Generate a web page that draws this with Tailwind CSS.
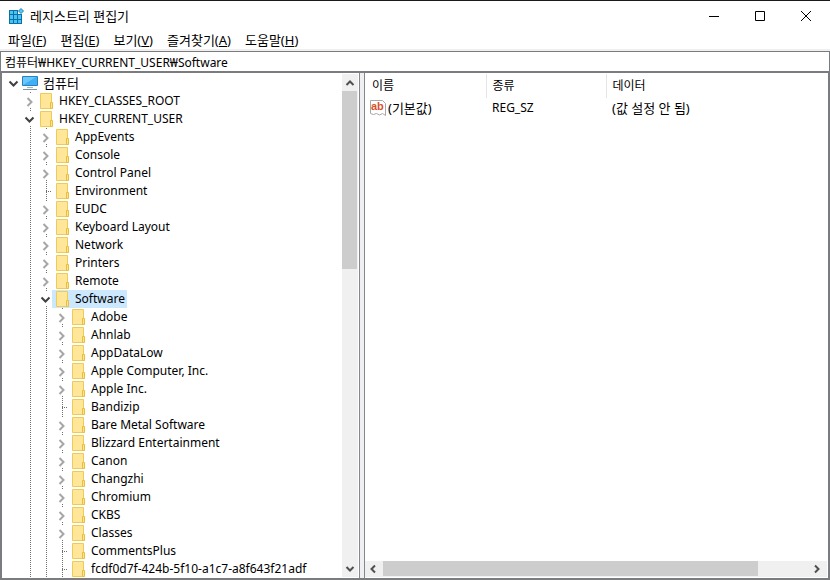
<!DOCTYPE html>
<html lang="ko">
<head>
  <meta charset="UTF-8" />
  <meta name="viewport" content="width=device-width, initial-scale=1" />
  <title>레지스트리 편집기</title>
  <script src="https://cdn.jsdelivr.net/npm/@tailwindcss/browser@4"></script>
</head>
<body class="h-screen overflow-hidden bg-white text-black text-[12px] leading-[18px] font-['Noto_Sans','Noto_Sans_CJK_KR',sans-serif]">
  <svg class="hidden">
    <symbol id="folder" viewBox="0 0 16 16">
      <path d="M2.500.5h11v15h-11z" fill="#ffe699" stroke="#eecb55" />
      <path d="M12.500 15.500v-6h2v6z" fill="#ffe48f" stroke="#e8bf3c" />
    </symbol>
    <symbol id="computer" viewBox="0 0 16 16">
      <path d="M.5 1.500h15v9H.5z" fill="#3fb0f5" stroke="#2a82bd" />
      <path d="M1 10V2h13z" fill="#6cc8fb" />
      <path d="M5 12h6v1H5z" fill="#9fb4c4" />
      <path d="M1 14.500h14" stroke="#7f95a6" />
    </symbol>
    <symbol id="closed" viewBox="0 0 14 14">
      <path d="M5.500 4l4 4-4 4" fill="none" stroke="#a6a6a6" stroke-width="2" />
    </symbol>
    <symbol id="open" viewBox="0 0 14 14">
      <path d="M3.500 5.500l4 4 4-4" fill="none" stroke="#404040" stroke-width="2" />
    </symbol>
    <symbol id="arrow" viewBox="0 0 16 16">
      <path d="M4.500 10l3.500-3.500 3.500 3.500" fill="none" stroke="#505050" stroke-width="2" />
    </symbol>
  </svg>

  <div class="flex h-full flex-col border-t border-[#1a1a1a]">
    <header class="flex h-[29px] shrink-0 items-center pl-2 pr-px">
      <svg class="h-4 w-4" viewBox="0 0 16 16">
        <path d="M1 2h9v4h4v10H1z" fill="#0b6fa8" />
        <path d="M2 3h3v3H2zM6 3h3v3H6zM2 7h3v4H2zM6 7h3v4H6zM10 7h3v4h-3zM2 12h3v3H2zM6 12h3v3H6zM10 12h3v3h-3z" fill="#4cc2f1" />
        <path d="M13 .5L15.500 3 13 5.500 10.500 3z" fill="#5cc4ee" stroke="#1d83b8" />
      </svg>
      <h1 class="ml-[6px] flex-1 text-[13px]">레지스트리 편집기</h1>
      <button class="flex h-full w-[46px] items-center justify-center" aria-label="최소화">
        <svg class="h-[10px] w-[10px]" viewBox="0 0 10 10"><path d="M0 5.500h10" stroke="#000" /></svg>
      </button>
      <button class="flex h-full w-[46px] items-center justify-center" aria-label="최대화">
        <svg class="h-[10px] w-[10px]" viewBox="0 0 10 10"><path d="M.5.5h9v9h-9z" fill="none" stroke="#000" /></svg>
      </button>
      <button class="flex h-full w-[46px] items-center justify-center" aria-label="닫기">
        <svg class="h-[10px] w-[10px]" viewBox="0 0 10 10"><path d="M0 0l10 10M10 0L0 10" stroke="#000" /></svg>
      </button>
    </header>

    <nav class="flex h-[21px] shrink-0 items-end gap-[14px] border-b-2 border-[#f0f0f0] pl-2 text-[13px]">
      <button>파일(<u>F</u>)</button>
      <button>편집(<u>E</u>)</button>
      <button>보기(<u>V</u>)</button>
      <button>즐겨찾기(<u>A</u>)</button>
      <button>도움말(<u>H</u>)</button>
    </nav>

    <input type="text" aria-label="주소" value="컴퓨터₩HKEY_CURRENT_USER₩Software"
      class="h-[21px] shrink-0 border border-[#7a7c80] pl-1 outline-none" />

    <main class="flex min-h-0 flex-1 border-x-2 border-b-2 border-t border-[#7a7c80] bg-[#f0f0f0]">
      <section class="flex w-[358px] shrink-0 border-r border-[#828790] bg-white pt-px">
        <ul id="tree" class="min-w-0 flex-1 overflow-hidden pl-1 whitespace-nowrap"></ul>
        <div class="mr-px mb-px flex w-4 flex-col bg-[#f0f0f0]">
          <button class="h-[17px] w-4" aria-label="위로"><svg class="h-4 w-4"><use href="#arrow" /></svg></button>
          <div class="flex-1"><div class="h-[178px] w-[15px] bg-[#cdcdcd]"></div></div>
          <button class="h-[17px] w-4" aria-label="아래로"><svg class="h-4 w-4 rotate-180"><use href="#arrow" /></svg></button>
        </div>
      </section>

      <section class="ml-1 flex min-w-0 flex-1 flex-col border-l border-[#828790] bg-white pt-px">
        <div class="flex-1">
          <table class="w-full table-fixed text-left">
            <thead>
              <tr class="h-6">
                <th class="w-[121px] border-r border-[#e5e5e5] pl-[7px] font-normal">이름</th>
                <th class="w-[120px] border-r border-[#e5e5e5] pl-[6px] font-normal">종류</th>
                <th class="pl-[6px] font-normal">데이터</th>
              </tr>
            </thead>
            <tbody>
              <tr class="h-5">
                <td class="pl-[5px]">
                  <div class="flex items-center gap-[2px]">
                    <svg class="h-4 w-4" viewBox="0 0 16 16">
                      <path d="M.5.5h12l3 3v12l-3-2-3 1.500-3-1.500-3 1-3-1z" fill="#fff" stroke="#a8a8a8" />
                      <text x="1" y="10" font-size="11" font-weight="bold" font-family="Liberation Sans" fill="#d8502b">ab</text>
                    </svg>
                    <span class="text-[13px]">(기본값)</span>
                  </div>
                </td>
                <td class="pl-[6px]">REG_SZ</td>
                <td class="pl-[6px] text-[13px]">(값 설정 안 됨)</td>
              </tr>
            </tbody>
          </table>
        </div>
        <div class="mr-px mb-px flex h-4 bg-[#f0f0f0]">
          <button class="h-4 w-[18px]" aria-label="왼쪽"><svg class="h-4 w-4 -rotate-90"><use href="#arrow" /></svg></button>
          <div class="flex-1"><div class="h-[15px] w-[88%] bg-[#cdcdcd]"></div></div>
          <button class="h-4 w-[18px]" aria-label="오른쪽"><svg class="h-4 w-4 rotate-90"><use href="#arrow" /></svg></button>
        </div>
      </section>
    </main>
  </div>

  <script>
    const leaf = name => ({ name, leaf: true });
    const key = name => ({ name });

    const root = {
      name: '컴퓨터', icon: 'computer', children: [
        key('HKEY_CLASSES_ROOT'),
        { name: 'HKEY_CURRENT_USER', children: [
          key('AppEvents'), key('Console'), key('Control Panel'), leaf('Environment'), key('EUDC'),
          key('Keyboard Layout'), key('Network'), key('Printers'), key('Remote'),
          { name: 'Software', selected: true, children: [
            key('Adobe'), key('Ahnlab'), key('AppDataLow'), key('Apple Computer, Inc.'), key('Apple Inc.'),
            leaf('Bandizip'), key('Bare Metal Software'), key('Blizzard Entertainment'), key('Canon'),
            key('Changzhi'), key('Chromium'), key('CKBS'), key('Classes'), leaf('CommentsPlus'),
            leaf('fcdf0d7f-424b-5f10-a1c7-a8f643f21adf')
          ] }
        ] }
      ]
    };

    function toggle(node) {
      if (node.leaf) {
        return '<span class="ml-2 h-px w-[6px] bg-[repeating-linear-gradient(to_right,#707070_0_1px,transparent_1px_2px)]"></span>';
      }
      const open = Boolean(node.children);
      return `<button class="h-[14px] w-[14px] bg-white" aria-label="${open ? '접기' : '펼치기'}">
        <svg class="h-full w-full"><use href="#${open ? 'open' : 'closed'}" /></svg></button>`;
    }

    function render(node) {
      return `<li>
        <div class="flex h-[18px] items-center">
          ${toggle(node)}
          <a href="#" class="flex h-full items-center pl-[2px] ${node.selected ? 'bg-[#cce8ff]' : ''}">
            <svg class="h-4 w-4"><use href="#${node.icon || 'folder'}" /></svg>
            <span class="pl-[5px] pr-[2px] ${node.icon ? 'text-[13px]' : ''}">${node.name}</span>
          </a>
        </div>
        ${node.children ? `<ul class="ml-4 bg-[repeating-linear-gradient(to_bottom,#707070_0_1px,transparent_1px_2px)] bg-[length:1px_100%] bg-[position:8px_0] bg-no-repeat">${node.children.map(render).join('')}</ul>` : ''}
      </li>`;
    }

    document.getElementById('tree').innerHTML = render(root);
  </script>
</body>
</html>
